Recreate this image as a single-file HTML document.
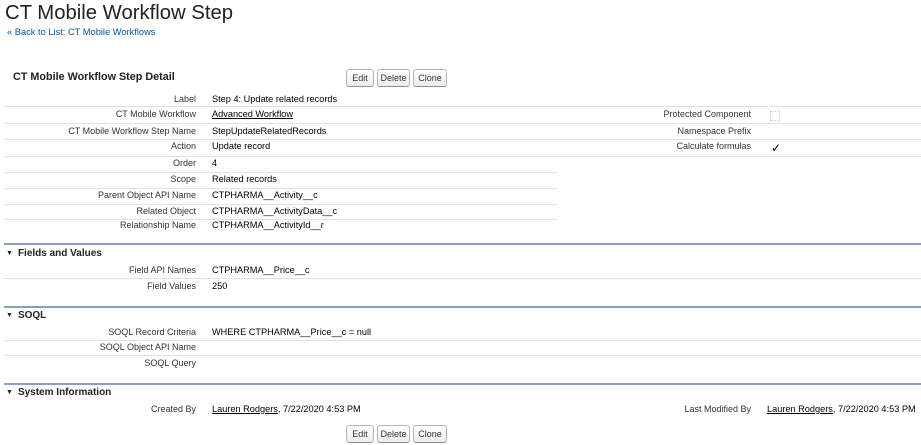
<!DOCTYPE html>
<html><head><meta charset="utf-8"><style>
body{margin:0;width:921px;height:445px;background:#fff;font-family:"Liberation Sans",Arial,sans-serif;position:relative;overflow:hidden}
.a{position:absolute;white-space:nowrap;line-height:16px;height:16px}
.l{font-size:9px;color:#333;text-align:right}
.lc{right:725px}
.rc{right:170px}
.v{font-size:9.2px;color:#000}
.vc{left:212px}
.b{position:absolute;height:1px;background:#e3e3e7}
.sec{position:absolute;left:4px;right:0;height:2px;background:#8a9fc1}
.h{position:absolute;left:6px;font-size:10px;font-weight:bold;color:#222;line-height:14px}
.h span{font-size:7px;margin-right:5px;position:relative;top:-1px}
.btn{position:absolute;height:16px;border:1px solid #b5b5b5;border-bottom-color:#8f8f8f;border-radius:3px;background:linear-gradient(#fff,#ececec);font-size:9px;color:#333;line-height:16px;text-align:center}
u{text-decoration:underline}
</style></head><body>
<div class="a" style="left:5px;top:1px;font-size:20.3px;line-height:24px;height:24px;color:#222">CT Mobile Workflow Step</div>
<div class="a" style="left:7px;top:24px;font-size:9.3px;color:#015ba7">« Back to List: CT Mobile Workflows</div>
<div class="a" style="left:13px;top:69px;font-size:10.8px;font-weight:bold;color:#222">CT Mobile Workflow Step Detail</div>
<div class="btn" style="left:346px;top:69px;width:26px">Edit</div>
<div class="btn" style="left:377px;top:69px;width:31px">Delete</div>
<div class="btn" style="left:413px;top:69px;width:32px">Clone</div>

<div class="a l lc" style="top:91px">Label</div><div class="a v vc" style="top:91px">Step 4: Update related records</div>
<div class="b" style="left:4px;width:917px;top:106px"></div>
<div class="a l lc" style="top:106px">CT Mobile Workflow</div><div class="a v vc" style="top:106px"><u>Advanced Workflow</u></div>
<div class="a l rc" style="top:106px">Protected Component</div>
<div style="position:absolute;left:770px;top:111px;width:8px;height:8px;border:1px dotted #ccc"></div>
<div class="b" style="left:4px;width:917px;top:123px"></div>
<div class="a l lc" style="top:123px">CT Mobile Workflow Step Name</div><div class="a v vc" style="top:123px">StepUpdateRelatedRecords</div>
<div class="a l rc" style="top:123px">Namespace Prefix</div>
<div class="b" style="left:4px;width:917px;top:139px"></div>
<div class="a l lc" style="top:138px">Action</div><div class="a v vc" style="top:138px">Update record</div>
<div class="a l rc" style="top:138px">Calculate formulas</div>
<div class="a" style="left:771px;top:140px;font-size:12px;color:#000">✓</div>
<div class="b" style="left:4px;width:917px;top:156px"></div>
<div class="a l lc" style="top:155px">Order</div><div class="a v vc" style="top:155px">4</div>
<div class="b" style="left:4px;width:553px;top:172px"></div>
<div class="a l lc" style="top:171px">Scope</div><div class="a v vc" style="top:171px">Related records</div>
<div class="b" style="left:4px;width:553px;top:188px"></div>
<div class="a l lc" style="top:187px">Parent Object API Name</div><div class="a v vc" style="top:187px">CTPHARMA__Activity__c</div>
<div class="b" style="left:4px;width:553px;top:204px"></div>
<div class="a l lc" style="top:203px">Related Object</div><div class="a v vc" style="top:203px">CTPHARMA__ActivityData__c</div>
<div class="b" style="left:4px;width:553px;top:219px"></div>
<div class="a l lc" style="top:217px">Relationship Name</div><div class="a v vc" style="top:217px">CTPHARMA__ActivityId__r</div>

<div class="sec" style="top:243px"></div>
<div class="h" style="top:247px"><span>▼</span>Fields and Values</div>
<div class="a l lc" style="top:262px">Field API Names</div><div class="a v vc" style="top:262px">CTPHARMA__Price__c</div>
<div class="b" style="left:4px;width:917px;top:278px"></div>
<div class="a l lc" style="top:278px">Field Values</div><div class="a v vc" style="top:278px">250</div>

<div class="sec" style="top:306px"></div>
<div class="h" style="top:309px"><span>▼</span>SOQL</div>
<div class="a l lc" style="top:324px">SOQL Record Criteria</div><div class="a v vc" style="top:324px">WHERE CTPHARMA__Price__c = null</div>
<div class="b" style="left:4px;width:917px;top:340px"></div>
<div class="a l lc" style="top:339px">SOQL Object API Name</div>
<div class="b" style="left:4px;width:917px;top:355px"></div>
<div class="a l lc" style="top:355px">SOQL Query</div>

<div class="sec" style="top:383px"></div>
<div class="h" style="top:386px"><span>▼</span>System Information</div>
<div class="a l lc" style="top:401px">Created By</div><div class="a v vc" style="top:401px"><u>Lauren Rodgers</u>, 7/22/2020 4:53 PM</div>
<div class="a l rc" style="top:401px">Last Modified By</div><div class="a v" style="left:767px;top:401px"><u>Lauren Rodgers</u>, 7/22/2020 4:53 PM</div>

<div class="btn" style="left:346px;top:425px;width:26px">Edit</div>
<div class="btn" style="left:377px;top:425px;width:31px">Delete</div>
<div class="btn" style="left:413px;top:425px;width:32px">Clone</div>
</body></html>
